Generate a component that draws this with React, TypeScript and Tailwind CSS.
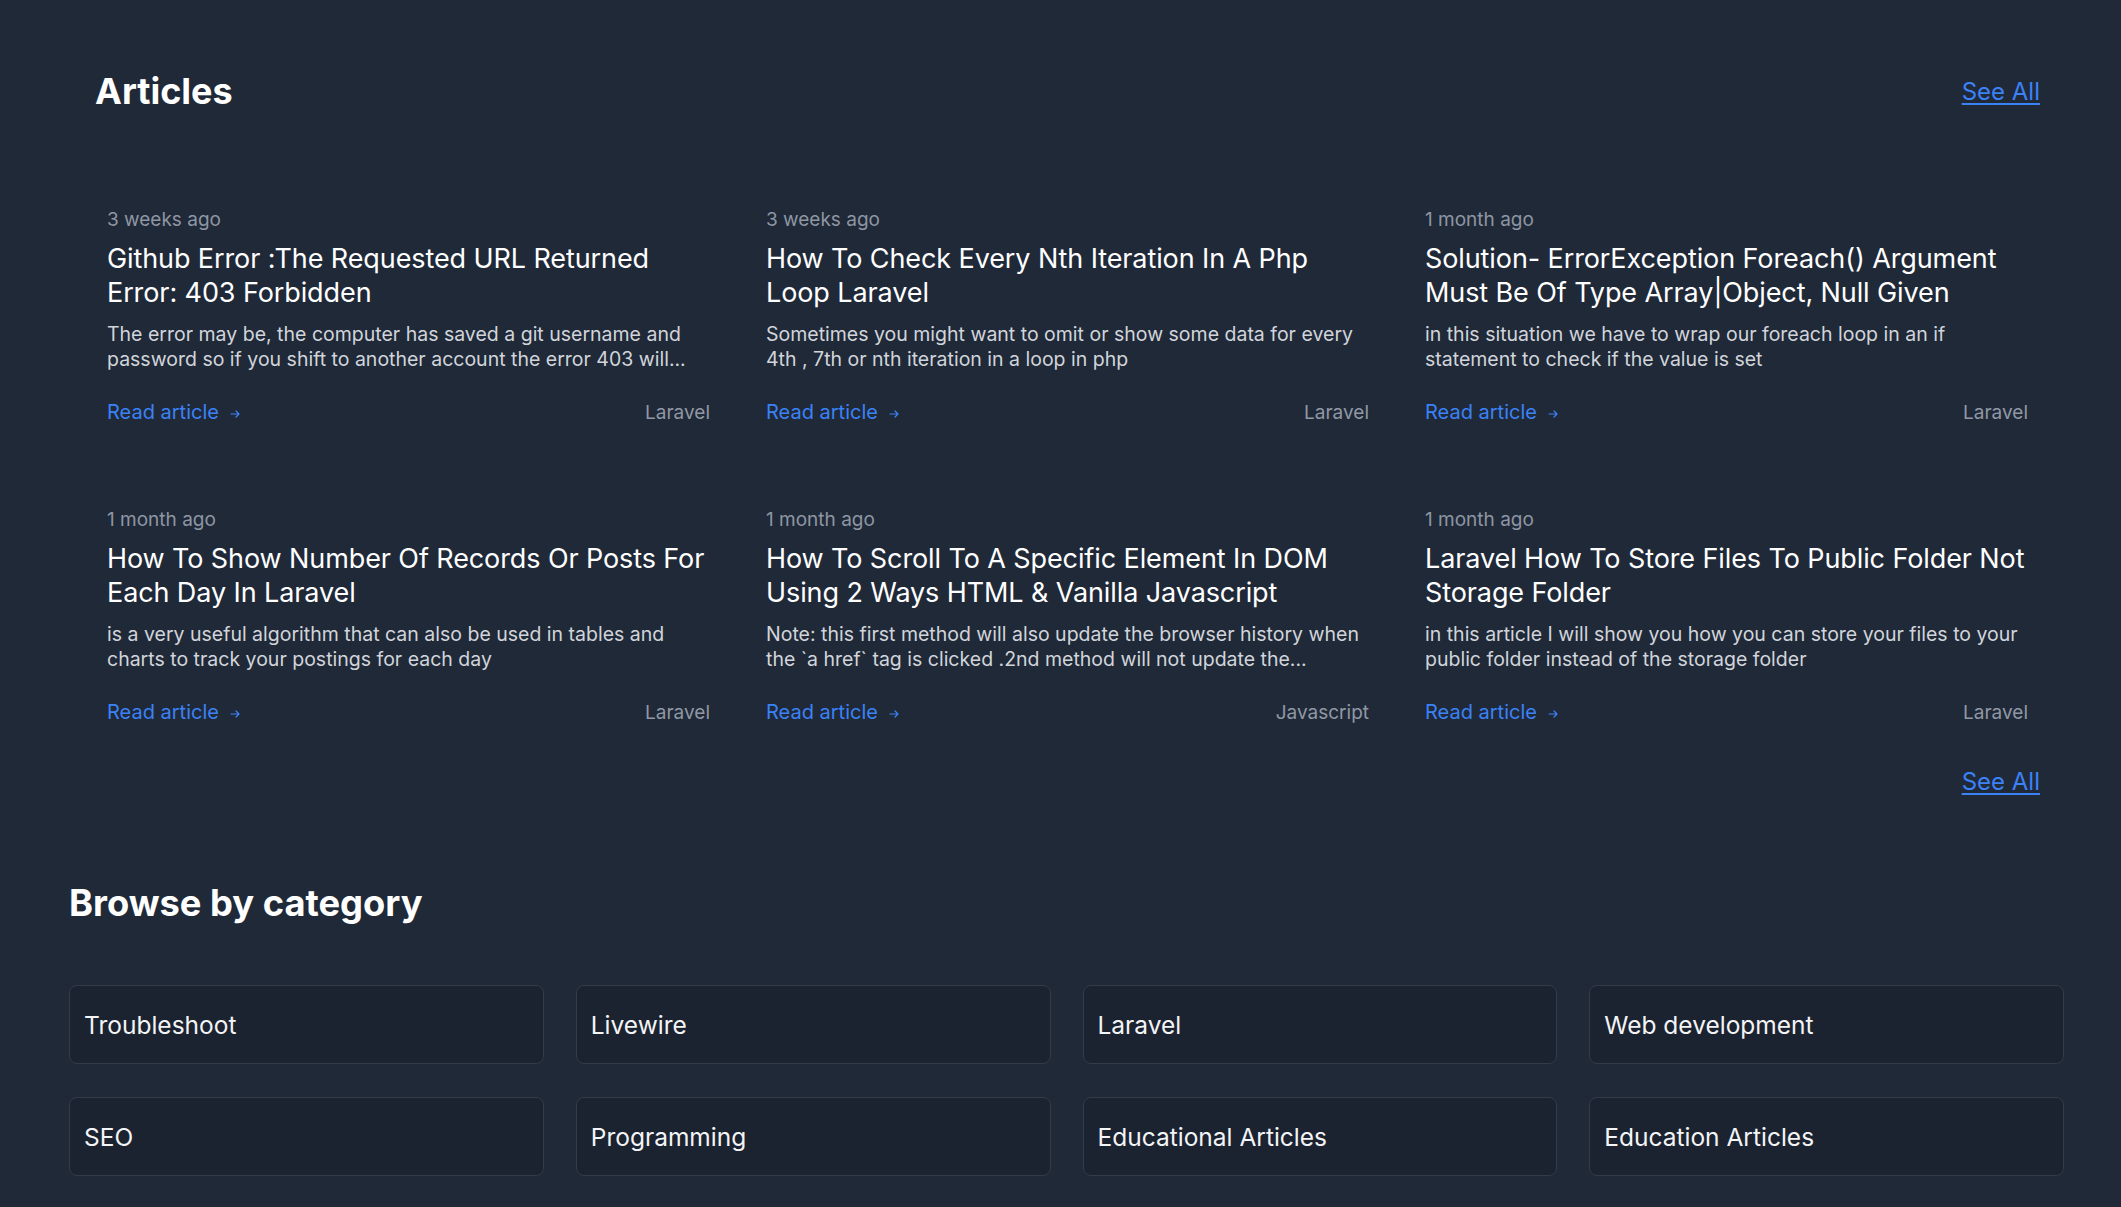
import React from "react";

interface Article {
  date: string;
  title: string;
  excerpt: string;
  category: string;
}

const articles: Article[] = [
  {
    date: "3 weeks ago",
    title: "Github Error :The Requested URL Returned Error: 403 Forbidden",
    excerpt:
      "The error may be, the computer has saved a git username and password so if you shift to another account the error 403 will...",
    category: "Laravel",
  },
  {
    date: "3 weeks ago",
    title: "How To Check Every Nth Iteration In A Php Loop Laravel",
    excerpt:
      "Sometimes you might want to omit or show some data for every 4th , 7th or nth iteration in a loop in php",
    category: "Laravel",
  },
  {
    date: "1 month ago",
    title:
      "Solution- ErrorException Foreach() Argument Must Be Of Type Array|Object, Null Given",
    excerpt:
      "in this situation we have to wrap our foreach loop in an if statement to check if the value is set",
    category: "Laravel",
  },
  {
    date: "1 month ago",
    title: "How To Show Number Of Records Or Posts For Each Day In Laravel",
    excerpt:
      "is a very useful algorithm that can also be used in tables and charts to track your postings for each day",
    category: "Laravel",
  },
  {
    date: "1 month ago",
    title:
      "How To Scroll To A Specific Element In DOM Using 2 Ways HTML & Vanilla Javascript",
    excerpt:
      "Note: this first method will also update the browser history when the `a href` tag is clicked .2nd method will not update the...",
    category: "Javascript",
  },
  {
    date: "1 month ago",
    title: "Laravel How To Store Files To Public Folder Not Storage Folder",
    excerpt:
      "in this article I will show you how you can store your files to your public folder instead of the storage folder",
    category: "Laravel",
  },
];

const categories = [
  "Troubleshoot",
  "Livewire",
  "Laravel",
  "Web development",
  "SEO",
  "Programming",
  "Educational Articles",
  "Education Articles",
];

function ArticleCard({ article }: { article: Article }) {
  return (
    <div className="px-[12px] py-[13px]">
      <p className="text-[19px] leading-[27px] text-[#8e96a3]">
        {article.date}
      </p>
      <h3 className="mt-[9px] text-[27px] leading-[33.5px] tracking-[-0.1px] text-white">
        {article.title}
      </h3>
      <p className="mt-[13px] text-[19.5px] leading-[25px] text-[#d1d5db]">
        {article.excerpt}
      </p>
      <div className="mt-[27px] flex items-center justify-between leading-[27px]">
        <a href="#" className="flex items-center text-[20px] text-[#3b82f6]">
          Read article
          <svg
            className="ml-[11px] mt-[2px]"
            width="10"
            height="10"
            viewBox="0 0 10 10"
            fill="none"
            stroke="currentColor"
            strokeWidth="1.2"
            strokeLinecap="round"
            strokeLinejoin="round"
          >
            <path d="M1 5h8M6 2l3 3-3 3" />
          </svg>
        </a>
        <span className="text-[19px] text-[#9098a5]">{article.category}</span>
      </div>
    </div>
  );
}

export default function App() {
  return (
    <div
      className="min-h-screen w-full bg-[#202938]"
      style={{ fontFamily: "Inter, 'Noto Sans', sans-serif" }}
    >
      <section className="pl-[95px] pr-[81px] pt-[69px]">
        <div className="flex items-center justify-between">
          <h2 className="text-[36px] leading-[45px] font-bold text-white">
            Articles
          </h2>
          <a
            href="#"
            className="text-[24px] leading-[32px] text-[#3b82f6] underline underline-offset-[3px]"
          >
            See All
          </a>
        </div>

        <div className="mt-[79px] grid grid-cols-3 gap-x-[32px] gap-y-[54px]">
          {articles.map((article) => (
            <ArticleCard key={article.title} article={article} />
          ))}
        </div>

        <div className="mt-[27px] flex justify-end">
          <a
            href="#"
            className="text-[24px] leading-[32px] text-[#3b82f6] underline underline-offset-[3px]"
          >
            See All
          </a>
        </div>
      </section>

      <section className="pl-[69px] pr-[57px] pt-[83px] pb-[28px]">
        <h2 className="text-[36.3px] leading-[45px] font-bold text-white">
          Browse by category
        </h2>
        <div className="mt-[59px] grid grid-cols-4 gap-x-[32px] gap-y-[33px]">
          {categories.map((name) => (
            <a
              key={name}
              href="#"
              className="flex h-[79px] items-center rounded-[8px] border border-[#323b4a] bg-[#1b2230] px-[14px] pt-[1px] text-[24.5px] text-[#f3f4f6]"
            >
              {name}
            </a>
          ))}
        </div>
      </section>
    </div>
  );
}
